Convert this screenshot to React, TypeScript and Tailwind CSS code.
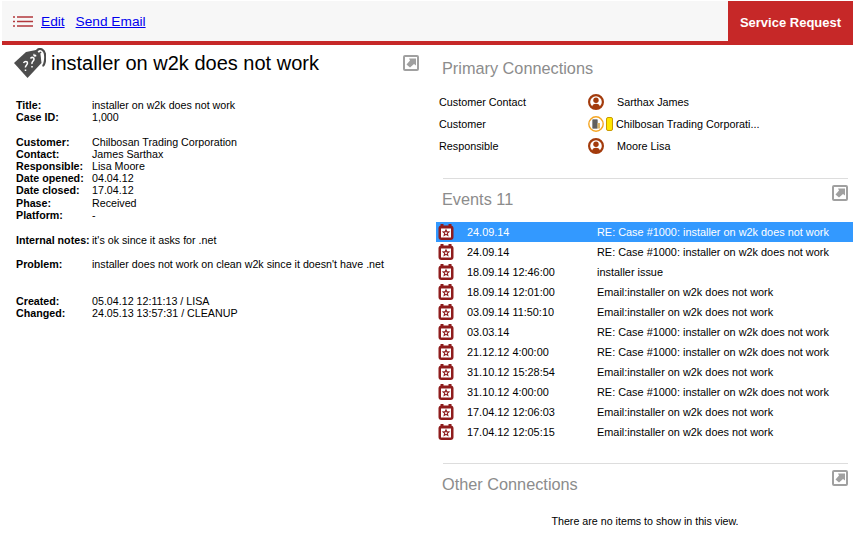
const EVENTS = [
  { date: "24.09.14", subject: "RE: Case #1000: installer on w2k does not work", active: true },
  { date: "24.09.14", subject: "RE: Case #1000: installer on w2k does not work" },
  { date: "18.09.14 12:46:00", subject: "installer issue" },
  { date: "18.09.14 12:01:00", subject: "Email:installer on w2k does not work" },
  { date: "03.09.14 11:50:10", subject: "Email:installer on w2k does not work" },
  { date: "03.03.14", subject: "RE: Case #1000: installer on w2k does not work" },
  { date: "21.12.12 4:00:00", subject: "RE: Case #1000: installer on w2k does not work" },
  { date: "31.10.12 15:28:54", subject: "Email:installer on w2k does not work" },
  { date: "31.10.12 4:00:00", subject: "RE: Case #1000: installer on w2k does not work" },
  { date: "17.04.12 12:06:03", subject: "Email:installer on w2k does not work" },
  { date: "17.04.12 12:05:15", subject: "Email:installer on w2k does not work" },
];

function Field({ label, value }: { label: string; value: string }) {
  return (
    <div className="flex h-[12.2px] items-center whitespace-nowrap">
      <span className="w-[76px] shrink-0 font-bold">{label}</span>
      <span>{value}</span>
    </div>
  );
}

function MenuIcon() {
  return (
    <svg width="20" height="11" viewBox="0 0 20 11" className="shrink-0">
      <path d="M0 1h2M4 1h16M0 5.500h2M4 5.500h16M0 10h2M4 10h16" stroke="#b2383c" strokeWidth="1.600" />
    </svg>
  );
}

function ExpandIcon() {
  return (
    <svg width="16" height="16" viewBox="0 0 16 16" className="shrink-0">
      <rect x="1" y="1" width="14" height="14" rx="1" fill="#fff" stroke="#a0a0a0" strokeWidth="2" />
      <path d="M6 3.500h7v7l-2-1.500-4 3.500-3.500-3 3.500-4z" fill="#a0a0a0" />
    </svg>
  );
}

function PersonIcon() {
  return (
    <svg width="16" height="16" viewBox="0 0 16 16" className="shrink-0">
      <circle cx="8" cy="8" r="6.900" fill="#fff" stroke="#a33b0c" strokeWidth="2.200" />
      <circle cx="8" cy="6.200" r="2.700" fill="#a33b0c" />
      <path d="M4 12.500c.8-2 2-2.700 4-2.700s3.200.7 4 2.700l-2 2h-4z" fill="#a33b0c" />
    </svg>
  );
}

function CompanyIcon() {
  return (
    <svg width="16" height="16" viewBox="0 0 16 16" className="shrink-0">
      <circle cx="8" cy="8" r="7.200" fill="#fff" stroke="#f5a623" strokeWidth="1.400" />
      <rect x="4.500" y="3.500" width="5" height="9" fill="#2b2b2b" />
      <rect x="9.500" y="7" width="2.500" height="5.500" fill="#d9b56a" />
      <path d="M5.500 5h1M7.500 5h1M5.500 7h1M7.500 7h1M5.500 9h1M7.500 9h1M5.500 11h1M7.500 11h1" stroke="#fff" strokeWidth="1" />
    </svg>
  );
}

function EventIcon() {
  return (
    <svg width="16" height="16" viewBox="0 0 16 16" className="shrink-0">
      <rect x="0.500" y="1.500" width="15" height="14.500" rx="3" fill="#8f1d1d" />
      <rect x="2.500" y="0" width="3" height="3" fill="#8f1d1d" />
      <rect x="10.500" y="0" width="3" height="3" fill="#8f1d1d" />
      <rect x="3" y="4.500" width="10" height="9" fill="#fff" />
      <path d="M8 4.500l1.200 2.800 3.100.2-2.400 2 .8 3L8 11l-2.700 1.500.8-3-2.400-2 3.100-.2z" fill="#8f1d1d" />
      <path d="M8 7.500l.6 1 1 .1-.8.7.3 1L8 9.800l-1.100.5.3-1-.8-.7 1-.1z" fill="#fff" />
    </svg>
  );
}

function TagIcon() {
  return (
    <svg width="32" height="32" viewBox="0 0 32 32" className="shrink-0">
      <path d="M0 15L12 4l10-2 4.500 4.500 1 8.500L13.500 30z" fill="#4d4d4d" />
      <circle cx="21" cy="7" r="1.800" fill="#fff" />
      <path d="M21 6.500C22 2 25 0 28 1.500s3.500 7 3 11c-.3 2.500-1 5-2.500 5.500" fill="none" stroke="#4d4d4d" strokeWidth="2.200" />
      <path d="M22 7c2-1 4-1.500 5-3" fill="none" stroke="#4d4d4d" strokeWidth="1.500" />
      <path d="M9.500 15c1-2 4-2 4 0s-2.500 2.500-2 4.500M11.500 21.500v1.500M16.500 10.500c1-2 4-1 3.500 1s-2.500 2-2 4.500M18 18v1.500" fill="none" stroke="#fff" strokeWidth="1.500" />
    </svg>
  );
}

function SectionHeader({ title }: { title: string }) {
  return (
    <div className="flex h-6 items-start justify-between">
      <h2 className="-ml-px mt-1 text-[16.3px] leading-5 text-[#8c8c8c]">{title}</h2>
      <ExpandIcon />
    </div>
  );
}

export default function App() {
  return (
    <div className="w-[853px] h-[534px] overflow-hidden bg-white pt-px text-[10.9px] text-black font-['Liberation_Sans',Arial,sans-serif]">
      <header className="ml-[2px] flex h-11 border-b-4 border-[#c62828]">
        <div className="flex flex-1 items-center bg-[#f7f7f7] pl-[11px] text-[13.7px]">
          <MenuIcon />
          <a href="#" className="ml-2 pt-[3px] text-[#0000ee] underline">Edit</a>
          <a href="#" className="ml-[11px] pt-[3px] text-[#0000ee] underline">Send Email</a>
        </div>
        <div className="-mb-1 flex w-[125px] items-center justify-center bg-[#c62828] text-[13px] font-bold text-white">
          Service Request
        </div>
      </header>

      <div className="flex">
        <main className="w-[434px] pl-[14px] text-[10.7px]">
          <div className="mt-[3px] flex h-8 items-center pr-[15px]">
            <TagIcon />
            <h1 className="mb-[2px] ml-[5px] flex-1 whitespace-nowrap text-[20px] leading-7">installer on w2k does not work</h1>
            <div className="mb-[3px]">
              <ExpandIcon />
            </div>
          </div>
          <div className="mt-[19px] pl-[2px]">
            <Field label="Title:" value="installer on w2k does not work" />
            <Field label="Case ID:" value="1,000" />
            <div className="h-[12.2px]" />
            <Field label="Customer:" value="Chilbosan Trading Corporation" />
            <Field label="Contact:" value="James Sarthax" />
            <Field label="Responsible:" value="Lisa Moore" />
            <Field label="Date opened:" value="04.04.12" />
            <Field label="Date closed:" value="17.04.12" />
            <Field label="Phase:" value="Received" />
            <Field label="Platform:" value="-" />
            <div className="h-[13px]" />
            <Field label="Internal notes:" value="it's ok since it asks for .net" />
            <div className="h-[11.8px]" />
            <Field label="Problem:" value="installer does not work on clean w2k since it doesn't have .net" />
            <div className="h-[24.8px]" />
            <Field label="Created:" value="05.04.12 12:11:13 / LISA" />
            <Field label="Changed:" value="24.05.13 13:57:31 / CLEANUP" />
          </div>
        </main>

        <aside className="w-[419px]">
          <div className="pl-[8px]">
            <h2 className="mt-[13px] text-[16.3px] leading-5 text-[#8c8c8c]">Primary Connections</h2>
            <div className="mt-[13px] -ml-[3px] text-[10.8px]">
              <div className="flex h-[22px] items-center">
                <span className="w-[149px]">Customer Contact</span>
                <PersonIcon />
                <span className="ml-[13px]">Sarthax James</span>
              </div>
              <div className="flex h-[22px] items-center">
                <span className="w-[149px]">Customer</span>
                <CompanyIcon />
                <span className="ml-[2px] h-[14px] w-[7px] rounded-[2px] border border-[#c99a00] bg-[#ffe600]" />
                <span className="ml-[3px]">Chilbosan Trading Corporati...</span>
              </div>
              <div className="flex h-[22px] items-center">
                <span className="w-[149px]">Responsible</span>
                <PersonIcon />
                <span className="ml-[13px]">Moore Lisa</span>
              </div>
            </div>
          </div>

          <div className="mt-[21px] ml-[9px] mr-[5px] border-t border-[#dddddd] pt-[6px]">
            <SectionHeader title="Events 11" />
          </div>
          <div className="mt-[13px] ml-[2px]">
            {EVENTS.map((ev, i) => (
              <div
                key={i}
                className={`flex h-5 items-center pl-[2px] ${ev.active ? "bg-[#3399ff] text-white" : ""}`}
              >
                <EventIcon />
                <span className="ml-[13px] w-[130px]">{ev.date}</span>
                <span className="whitespace-nowrap">{ev.subject}</span>
              </div>
            ))}
          </div>

          <div className="mt-[21px] ml-[9px] mr-[5px] border-t border-[#dddddd] pt-[6px]">
            <SectionHeader title="Other Connections" />
          </div>
          <p className="mt-[19px] pl-[3px] text-center text-[10.7px]">There are no items to show in this view.</p>
        </aside>
      </div>
    </div>
  );
}
